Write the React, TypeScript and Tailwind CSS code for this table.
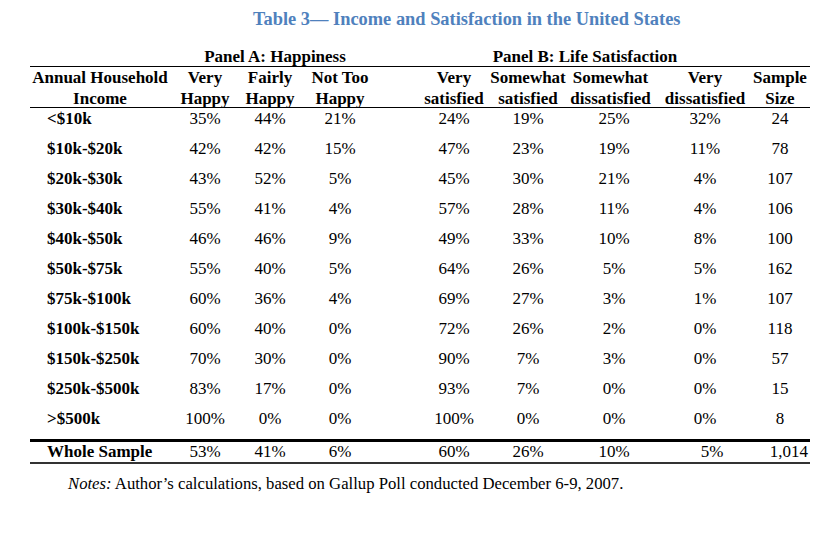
import React from "react";

const rows: [string, string[], string[], string][] = [
  ["<$10k", ["35%", "44%", "21%"], ["24%", "19%", "25%", "32%"], "24"],
  ["$10k-$20k", ["42%", "42%", "15%"], ["47%", "23%", "19%", "11%"], "78"],
  ["$20k-$30k", ["43%", "52%", "5%"], ["45%", "30%", "21%", "4%"], "107"],
  ["$30k-$40k", ["55%", "41%", "4%"], ["57%", "28%", "11%", "4%"], "106"],
  ["$40k-$50k", ["46%", "46%", "9%"], ["49%", "33%", "10%", "8%"], "100"],
  ["$50k-$75k", ["55%", "40%", "5%"], ["64%", "26%", "5%", "5%"], "162"],
  ["$75k-$100k", ["60%", "36%", "4%"], ["69%", "27%", "3%", "1%"], "107"],
  ["$100k-$150k", ["60%", "40%", "0%"], ["72%", "26%", "2%", "0%"], "118"],
  ["$150k-$250k", ["70%", "30%", "0%"], ["90%", "7%", "3%", "0%"], "57"],
  ["$250k-$500k", ["83%", "17%", "0%"], ["93%", "7%", "0%", "0%"], "15"],
  [">$500k", ["100%", "0%", "0%"], ["100%", "0%", "0%", "0%"], "8"],
];

const grid =
  "grid grid-cols-[145px_60px_70px_70px_45px_68px_80px_92px_90px_60px]";

export default function App() {
  return (
    <div
      className="w-[840px] h-[539px] bg-white text-black text-[17px]"
      style={{ fontFamily: '"Liberation Serif", "Times New Roman", serif' }}
    >
      <div className="pt-[7px] pl-[253px] text-[18.4px] leading-[24px] font-bold text-[#4F81BD] whitespace-nowrap">
        Table 3— Income and Satisfaction in the United States
      </div>

      <div className="ml-[30px] w-[780px] mt-[17px]">
        {/* Panel headers */}
        <div className={`${grid} border-b border-black font-bold leading-[18px]`}>
          <div />
          <div className="col-span-3 text-center">Panel A: Happiness</div>
          <div />
          <div className="col-span-4 text-center">Panel B: Life Satisfaction</div>
          <div />
        </div>

        {/* Column headers */}
        <div className={`${grid} h-[41px] border-b border-black font-bold leading-[21px] whitespace-nowrap`}>
          <div className="text-center pr-[5px]">
            <div>Annual Household</div>
            <div>Income</div>
          </div>
          <div className="text-center">
            <div>Very</div>
            <div>Happy</div>
          </div>
          <div className="text-center">
            <div>Fairly</div>
            <div>Happy</div>
          </div>
          <div className="text-center">
            <div>Not Too</div>
            <div>Happy</div>
          </div>
          <div />
          <div className="text-center">
            <div>Very</div>
            <div>satisfied</div>
          </div>
          <div className="text-center">
            <div>Somewhat</div>
            <div>satisfied</div>
          </div>
          <div className="text-center pr-[7px]">
            <div>Somewhat</div>
            <div>dissatisfied</div>
          </div>
          <div className="text-center">
            <div>Very</div>
            <div>dissatisfied</div>
          </div>
          <div className="text-center">
            <div>Sample</div>
            <div>Size</div>
          </div>
        </div>

        {/* Data rows */}
        {rows.map(([label, a, b, n]) => (
          <div key={label} className={`${grid} h-[30px] leading-[22px] whitespace-nowrap`}>
            <div className="pl-[17px] font-bold">{label}</div>
            {a.map((v, i) => (
              <div key={"a" + i} className="text-center">
                {v}
              </div>
            ))}
            <div />
            {b.map((v, i) => (
              <div key={"b" + i} className="text-center">
                {v}
              </div>
            ))}
            <div className="text-center">{n}</div>
          </div>
        ))}

        {/* Whole sample */}
        <div
          className={`${grid} mt-[1px] border-t-[3px] border-b-2 border-t-black border-b-[#333] leading-[20px] whitespace-nowrap`}
        >
          <div className="pl-[17px] font-bold">Whole Sample</div>
          <div className="text-center">53%</div>
          <div className="text-center">41%</div>
          <div className="text-center">6%</div>
          <div />
          <div className="text-center">60%</div>
          <div className="text-center">26%</div>
          <div className="text-center">10%</div>
          <div className="text-center pl-[14px]">5%</div>
          <div className="text-right pr-[2px]">1,014</div>
        </div>
      </div>

      <div className="mt-[9px] pl-[68px] text-[16.7px] leading-[22px]">
        <span className="italic">Notes:</span> Author’s calculations, based on Gallup Poll conducted December 6-9, 2007.
      </div>
    </div>
  );
}
